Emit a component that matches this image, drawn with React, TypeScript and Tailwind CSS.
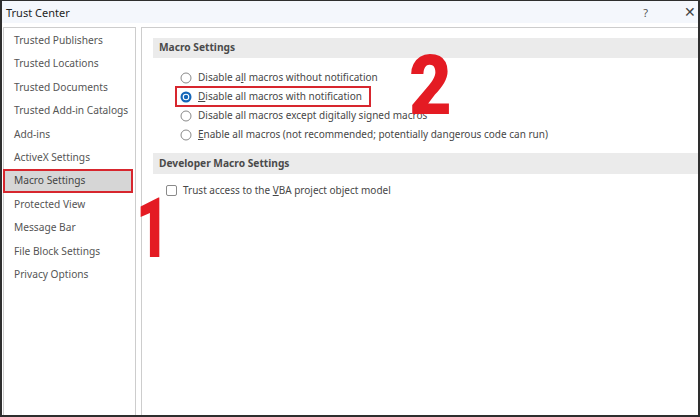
import React from "react";

const navItems = [
  "Trusted Publishers",
  "Trusted Locations",
  "Trusted Documents",
  "Trusted Add-in Catalogs",
  "Add-ins",
  "ActiveX Settings",
  "Macro Settings",
  "Protected View",
  "Message Bar",
  "File Block Settings",
  "Privacy Options",
];

function Radio({ checked }: { checked?: boolean }) {
  return (
    <svg width="12" height="12" viewBox="0 0 12 12" className="shrink-0">
      {checked ? (
        <>
          <circle cx="6" cy="6" r="5.5" fill="#1466b8" />
          <circle cx="6" cy="6" r="3.3" fill="#ffffff" />
          <circle cx="6" cy="6" r="2.2" fill="#1466b8" />
        </>
      ) : (
        <circle cx="6" cy="6" r="5" fill="#fff" stroke="#8a8a8a" strokeWidth="1" />
      )}
    </svg>
  );
}

export default function App() {
  const font = { fontFamily: '"Noto Sans", "Open Sans", sans-serif' };
  return (
    <div
      className="relative w-[700px] h-[417px] bg-white border-2 border-[#2e2e2e] border-t-[1px] flex flex-col overflow-hidden text-[#474747]"
      style={font}
    >
      {/* Title bar */}
      <div className="h-[22px] bg-[#f4f7fc] flex items-center pl-[4px] pr-[2px] shrink-0">
        <span className="text-[11px] text-[#1f1f1f] leading-none">Trust Center</span>
        <span className="ml-auto text-[11px] text-[#555] leading-none mr-[36px]">?</span>
        <span className="text-[14px] text-[#444] leading-none">✕</span>
      </div>

      {/* Body */}
      <div className="flex flex-1 pt-[4px] pl-[1px] min-h-0">
        {/* Left nav */}
        <div className="w-[133px] border border-b-0 border-[#cdcdcd] pt-[1px] shrink-0">
          {navItems.map((n) =>
            n === "Macro Settings" ? (
              <div
                key={n}
                className="h-[23.4px] mr-[2px] -ml-px bg-[#d6d6d6] border-[2.5px] border-[#d7262e] flex items-center pl-[9px] text-[10.2px] text-[#444] whitespace-nowrap"
              >
                {n}
              </div>
            ) : (
              <div key={n} className="h-[23.4px] flex items-center pl-[10px] text-[10.2px] text-[#555] whitespace-nowrap">
                {n}
              </div>
            )
          )}
        </div>

        {/* Right panel */}
        <div className="flex-1 ml-[5px] border-l border-t border-[#cdcdcd] pt-[10px] pl-[11px]">
          <div className="h-[20px] bg-[#ebebeb] flex items-center pl-[6px] text-[10.2px] font-bold text-[#4a4a4a]">
            Macro Settings
          </div>
          <div className="pt-[10px] pl-[27px] flex flex-col">
            <div className="h-[19px] flex items-center gap-[6px] text-[10px]">
              <Radio />
              <span>
                Disable a<span className="underline">l</span>l macros without notification
              </span>
            </div>
            <div className="h-[19px] flex items-center gap-[6px] text-[10px] relative">
              <Radio checked />
              <span>
                <span className="underline">D</span>isable all macros with notification
              </span>
              <div className="absolute left-[-5px] top-[-1px] w-[196px] h-[21px] border-[2.5px] border-[#d7262e]" />
            </div>
            <div className="h-[19px] flex items-center gap-[6px] text-[10px]">
              <Radio />
              <span>Disable all macros except digitally signed macros</span>
            </div>
            <div className="h-[19px] flex items-center gap-[6px] text-[10px]">
              <Radio />
              <span>
                <span className="underline">E</span>nable all macros (not recommended; potentially dangerous code can run)
              </span>
            </div>
          </div>

          <div className="mt-[9px] h-[21px] bg-[#ebebeb] flex items-center pl-[6px] text-[10.2px] font-bold text-[#4a4a4a]">
            Developer Macro Settings
          </div>
          <div className="pt-[7px] pl-[13px] flex items-center gap-[6px] text-[10px] h-[26px]">
            <span className="w-[11px] h-[11px] border border-[#8a8a8a] rounded-[2px] bg-white shrink-0" />
            <span>
              Trust access to the <span className="underline">V</span>BA project object model
            </span>
          </div>
        </div>
      </div>

      {/* Big annotation numbers */}
      <div
        className="absolute left-[134px] top-[186px] text-[84px] font-black text-[#e41b23] leading-none origin-left scale-x-[0.68]"
        style={{ fontFamily: 'Roboto, "Liberation Sans", sans-serif' }}
      >
        1
      </div>
      <div
        className="absolute left-[407px] top-[43px] text-[84px] font-black text-[#e41b23] leading-none origin-left scale-x-[0.88]"
        style={{ fontFamily: 'Roboto, "Liberation Sans", sans-serif' }}
      >
        2
      </div>
    </div>
  );
}
